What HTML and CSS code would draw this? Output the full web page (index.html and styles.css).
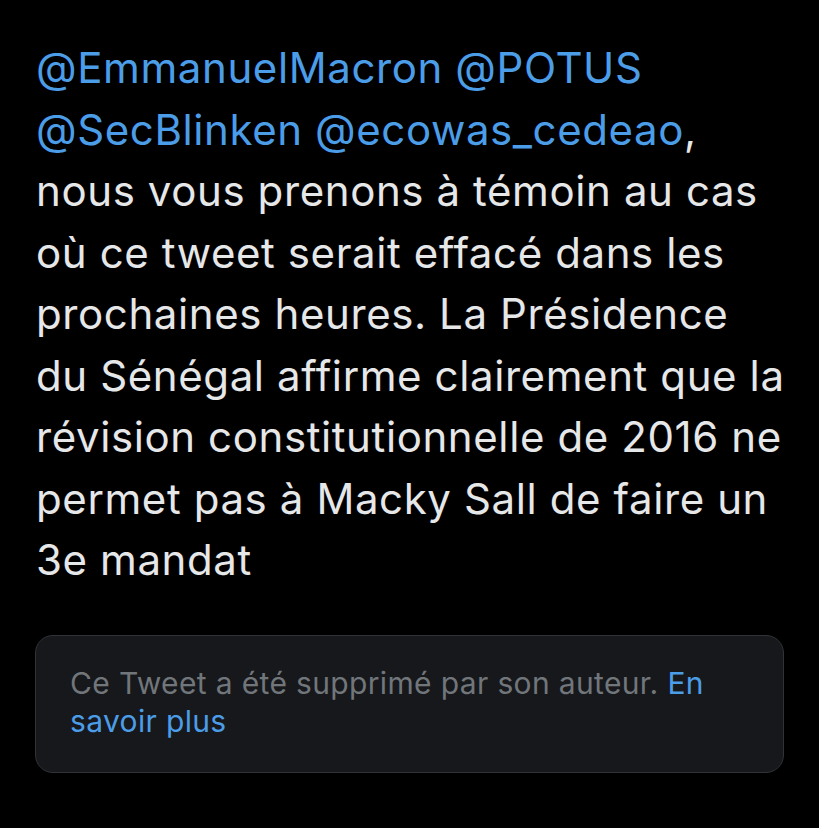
FILE: index.html
```html
<!DOCTYPE html>
<html lang="fr">
<head>
<meta charset="utf-8">
<link rel="stylesheet" href="styles.css">
</head>
<body>
<main class="tweet">
  <p class="tweet-text"><a class="mention">@EmmanuelMacron</a> <a class="mention">@POTUS</a><br><a class="mention">@SecBlinken</a> <a class="mention">@ecowas_cedeao</a>,<br>nous vous prenons à témoin au cas<br>où ce tweet serait effacé dans les<br>prochaines heures. La Présidence<br>du Sénégal affirme clairement que la<br>révision constitutionnelle de 2016 ne<br>permet pas à Macky Sall de faire un<br>3e mandat</p>
  <div class="quote">
    <p class="quote-text">Ce Tweet a été supprimé par son auteur. <a class="link">En<br>savoir plus</a></p>
  </div>
</main>
</body>
</html>
```
FILE: styles.css
```css
html, body {
  margin: 0;
  padding: 0;
  background: #000;
}
body {
  width: 819px;
  height: 828px;
  overflow: hidden;
  font-family: Inter, "Noto Sans", sans-serif;
}
.tweet {
  padding: 37px 36px 0 36px;
}
.tweet-text {
  margin: 0;
  font-size: 42px;
  line-height: 61.5px;
  color: #e6e7e8;
  white-space: nowrap;
  letter-spacing: 0.6px;
}
.mention, .link {
  color: #4c9de8;
  text-decoration: none;
}
.quote {
  margin-top: 44px;
  width: 749px;
  box-sizing: border-box;
  height: 138px;
  margin-left: -1px;
  background: #17181c;
  border: 1px solid #2f3336;
  border-radius: 18px;
  padding: 28px 34px;
}
.quote-text {
  margin: 0;
  font-size: 30px;
  line-height: 38px;
  color: #71767b;
  white-space: nowrap;
  letter-spacing: 0.35px;
}
```
